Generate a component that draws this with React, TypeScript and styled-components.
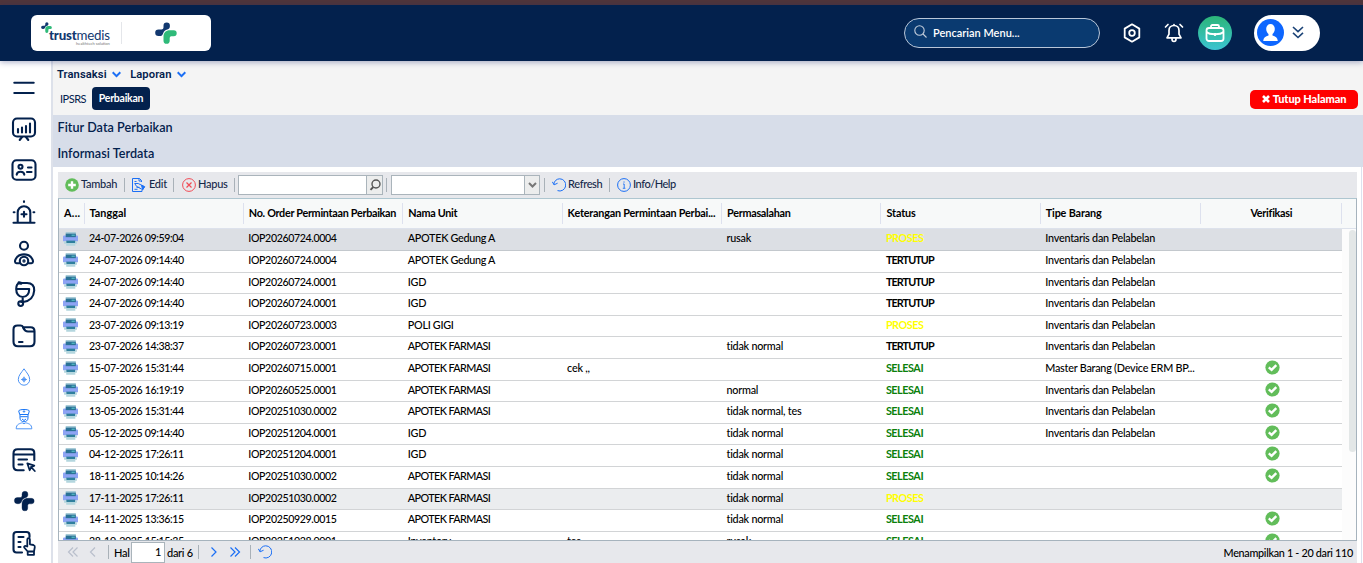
import React from "react";
import styled, { createGlobalStyle } from "styled-components";

const NAVY = "#03214d";
const BLUE = "#1b6ff5";

const GlobalStyle = createGlobalStyle`
  * { box-sizing: border-box; }
  body { margin: 0; overflow: hidden; background: #fff; }
  svg { display: block; flex: none; }
`;

const Page = styled.div`
  height: 563px;
  display: flex;
  flex-direction: column;
  overflow: hidden;
  font-family: Lato, "Liberation Sans", sans-serif;
  font-size: 11px;
  color: #000;
`;

const TopStrip = styled.div`
  flex: none;
  height: 5px;
  background: #50353a;
`;

const Header = styled.header`
  flex: none;
  height: 56px;
  display: flex;
  align-items: center;
  padding: 0 43px 0 31px;
  background: ${NAVY};
  box-shadow: 0 1px 6px rgba(30, 40, 110, 0.4);
  z-index: 1;
`;

const LogoCard = styled.div`
  width: 180px;
  height: 36px;
  border-radius: 6px;
  background: #fff;
  display: flex;
  align-items: center;
`;

const BrandHalf = styled.div`
  width: 91px;
  height: 22px;
  padding-left: 10px;
  border-right: 1px solid #e4e6ea;
  display: flex;
  align-items: flex-start;
`;

const Wordmark = styled.div`
  margin: 6px 0 0 -3px;
  font-size: 13.3px;
  line-height: 14px;
  letter-spacing: -0.2px;
  color: #12386f;
  b { font-weight: 900; }
`;

const Tagline = styled.div`
  font-size: 4px;
  line-height: 4px;
  letter-spacing: 0;
  text-align: right;
  color: #777;
`;

const MarkHalf = styled.div`
  flex: 1;
  display: flex;
  justify-content: center;
  padding-right: 1px;
`;

const Search = styled.div`
  margin-left: auto;
  width: 196px;
  height: 30px;
  border: 1px solid #b9c6d8;
  border-radius: 15px;
  background: #0a3a70;
  color: #fff;
  display: flex;
  align-items: center;
  padding: 0 0 2px 9px;
  gap: 6px;
  font-weight: 600;
  font-size: 11px;
  letter-spacing: 0;
  svg { margin-top: -2px; }
`;

const HeaderIcons = styled.div`
  display: flex;
  align-items: center;
  gap: 22px;
  margin: 0 14px 0 22px;
`;

const IconSlot = styled.div`
  width: 20px;
  display: flex;
  justify-content: center;
`;

const RoundButton = styled.div`
  width: 34px;
  height: 34px;
  border-radius: 50%;
  background: linear-gradient(#2cb578, #3bc4d2);
  display: flex;
  align-items: center;
  justify-content: center;
`;

const UserPill = styled.div`
  margin-left: 22px;
  width: 66px;
  height: 36px;
  border-radius: 18px;
  background: #fff;
  display: flex;
  align-items: center;
  padding: 0 0 1px 3px;
  gap: 8px;
`;

const Body = styled.div`
  flex: 1;
  min-height: 0;
  display: flex;
`;

const Sidebar = styled.nav`
  width: 51px;
  flex: none;
  padding: 12.5px 0 0 10px;
  display: flex;
  flex-direction: column;
  gap: 13.4px;
  svg { width: 28px; height: 28px; }
`;

const Main = styled.main`
  flex: 1;
  min-width: 0;
  border-left: 2px solid #dde1ea;
  display: flex;
  flex-direction: column;
`;

const MenuArea = styled.div`
  flex: none;
  height: 54px;
  background: #f4f4f4;
`;

const MenuBar = styled.div`
  height: 26px;
  padding-left: 4px;
  display: flex;
  align-items: center;
  gap: 9px;
`;

const MenuItem = styled.div`
  display: flex;
  align-items: center;
  gap: 5.5px;
  font-family: Roboto, "Liberation Sans", sans-serif;
  font-weight: 600;
  font-size: 11.2px;
  letter-spacing: 0.08px;
  color: ${NAVY};
`;

const TabRow = styled.div`
  height: 23px;
  padding: 0 5px 0 6px;
  display: flex;
  align-items: center;
`;

const Crumb = styled.span`
  width: 33px;
  padding-left: 1px;
  font-size: 11px;
  letter-spacing: -0.5px;
  color: ${NAVY};
`;

const ActiveTab = styled.span`
  width: 58px;
  height: 23px;
  border-radius: 4px;
  background: ${NAVY};
  color: #fff;
  font-weight: 700;
  font-size: 10.5px;
  line-height: 23px;
  letter-spacing: -0.25px;
  text-align: center;
`;

const CloseButton = styled.span`
  margin: 2px 0 0 auto;
  width: 108px;
  height: 19px;
  border-radius: 5px;
  background: #f00;
  color: #fff;
  display: flex;
  align-items: center;
  justify-content: center;
  gap: 3px;
  padding-bottom: 2px;
  font-weight: 900;
  font-size: 11px;
  line-height: 17px;
  letter-spacing: -0.08px;
`;

const SectionTitle = styled.div`
  flex: none;
  height: 26px;
  padding: 0 0 2px 4.5px;
  display: flex;
  align-items: center;
  background: #d7dde9;
  color: ${NAVY};
  font-weight: 600;
  font-size: 12.6px;
  letter-spacing: 0.04px;
`;

const Panel = styled.section`
  flex: 1;
  min-height: 0;
  margin-right: 1px;
  border-right: 1px solid #dde1ee;
  padding: 5px 4px 0 5px;
  display: flex;
  flex-direction: column;
`;

const Toolbar = styled.div`
  flex: none;
  height: 26px;
  padding-left: 7px;
  display: flex;
  align-items: center;
  background: #e7e8ec;
`;

const ToolButton = styled.div<{ $w: number; $gap?: number; $ls?: number }>`
  width: ${(p) => p.$w}px;
  display: flex;
  align-items: center;
  gap: ${(p) => p.$gap ?? 2}px;
  font-weight: 500;
  font-size: 11px;
  letter-spacing: ${(p) => p.$ls ?? -0.26}px;
  color: #16294a;
  white-space: nowrap;
  line-height: 14px;
  span { margin-top: -2px; }
`;

const Divider = styled.i<{ $mr: number }>`
  width: 1px;
  height: 14px;
  flex: none;
  margin-right: ${(p) => p.$mr}px;
  background: #a9b1b8;
`;

const Field = styled.div<{ $w: number; $mr: number }>`
  width: ${(p) => p.$w}px;
  height: 20px;
  margin-right: ${(p) => p.$mr}px;
  border: 1px solid #aab4bb;
  background: #fff;
  display: flex;
  justify-content: flex-end;
`;

const FieldTrigger = styled.div<{ $w: number }>`
  width: ${(p) => p.$w}px;
  border-left: 1px solid #aab4bb;
  background: #eceded;
  display: flex;
  align-items: center;
  justify-content: center;
`;

const Grid = styled.div`
  flex: none;
  height: 343px;
  border: 1px solid #a6b3bd;
  border-top-color: #aec6d0;
  display: flex;
  flex-direction: column;
  overflow: hidden;
`;

const COLUMNS = "25.5px 159.3px 159.5px 159.3px 159.4px 159.4px 159.4px 160px 141.2px";

const GridHeader = styled.div`
  flex: none;
  height: 30.4px;
  display: grid;
  grid-template-columns: ${COLUMNS};
  align-items: center;
  background: #f7f9f9;
  border-bottom: 1px solid #dde2ec;
`;

const HeadCell = styled.div<{ $center?: boolean; $ls?: number }>`
  height: 21px;
  padding: 0 4px 0 5px;
  line-height: 20px;
  border-right: 1px solid #dde1ee;
  font-weight: 700;
  font-size: 10.8px;
  letter-spacing: ${(p) => p.$ls ?? -0.1}px;
  text-align: ${(p) => (p.$center ? "center" : "left")};
  white-space: nowrap;
  overflow: hidden;
`;

const Scroller = styled.div`
  flex: 1;
  min-height: 0;
  display: flex;
  justify-content: space-between;
  overflow: hidden;
`;

const Rows = styled.div`
  width: 1283px;
`;

const Row = styled.div<{ $tone?: string }>`
  height: 21.6px;
  display: grid;
  grid-template-columns: ${COLUMNS};
  background: ${(p) => (p.$tone === "selected" ? "#dcdfe4" : p.$tone === "alt" ? "#ebedef" : "#fff")};
  border-bottom: 1px solid ${(p) => (p.$tone === "selected" ? "#c3c8cd" : "#d2d4d6")};
`;

const Cell = styled.div<{ $ls?: number }>`
  padding: 0 4.5px;
  line-height: 18px;
  font-size: 10.8px;
  letter-spacing: ${(p) => p.$ls ?? -0.23}px;
  font-weight: 500;
  white-space: nowrap;
  overflow: hidden;
`;

const NumCell = styled(Cell)`
  font-size: 10.6px;
  letter-spacing: -0.37px;
`;

const StatusCell = styled(Cell)<{ $status: string }>`
  font-weight: 700;
  color: ${(p) => (p.$status === "PROSES" ? "#ff0" : p.$status === "SELESAI" ? "#0a800a" : "#000")};
`;

const IconCell = styled.div`
  padding: 2.4px 0 0 4px;
`;

const CheckCell = styled.div`
  padding: 1px 0 0 2px;
  display: flex;
  justify-content: center;
`;

const ScrollTrack = styled.div`
  width: 14px;
  background: #fcfcfc;
  display: flex;
  justify-content: flex-end;
`;

const ScrollThumb = styled.div`
  width: 7px;
  height: 222px;
  margin-top: 1px;
  border-radius: 4px;
  background: #e3e7e7;
`;

const Pager = styled.div`
  flex: 1;
  display: flex;
  align-items: center;
  padding: 0 4px 0 9px;
  background: #e7e8ec;
  font-size: 11px;
  font-weight: 500;
  letter-spacing: -0.3px;
`;

const PageInput = styled.div`
  width: 34px;
  height: 21px;
  margin: 0 2px 0 1px;
  border: 1px solid #aab4bb;
  background: #fff;
  text-align: right;
  padding-right: 3px;
  line-height: 18px;
`;

const PagerSlot = styled.div<{ $w: number }>`
  width: ${(p) => p.$w}px;
  flex: none;
  white-space: nowrap;
`;

const Summary = styled.span`
  margin-left: auto;
  font-size: 10.8px;
  letter-spacing: -0.3px;
`;

const MARK_BACK =
  "M8.500 3.700a3.200 3.200 0 0 1 6.400 0C14.900 6.100 14.200 6.900 12.300 7.500 10.300 8.100 9 9 8.200 11.200 7.500 13.200 6.500 14 4.800 14H3.500a3.300 3.300 0 0 1 0-6.600H6.500Q8.500 7.400 8.500 5.400z";
const MARK_FRONT = "M18.700 8.200a3 3 0 0 1 0 6H16.300Q14.700 14.200 14.700 15.900V18.700a3.100 3.100 0 0 1-6.200 0V15C8.500 10.500 10.700 8.200 15 8.200z";

function PlusMark({ size }: { size: number }) {
  return (
    <svg width={size} height={size} viewBox="0 0 22 22">
      <path fill="#12386f" d={MARK_BACK} />
      <path fill="#2fba79" d={MARK_FRONT} />
    </svg>
  );
}

const Line = ({ children }: { children: React.ReactNode }) => (
  <svg viewBox="0 0 28 28" fill="none" stroke={NAVY} strokeWidth="2.1" strokeLinecap="round" strokeLinejoin="round">
    {children}
  </svg>
);

function SideIcons() {
  return (
    <Sidebar>
      <Line><path d="M4.300 8.800h19.400M4.300 19h19.400" /></Line>
      <Line>
        <rect x="3" y="3.500" width="22" height="18" rx="4" />
        <path d="M8 14v3.500M12 12.500v5M16 11v6.500M20 8.500v9M12 22l-2.300 3M16 22l2.300 3" />
      </Line>
      <Line>
        <rect x="2.500" y="4.200" width="23" height="19.600" rx="4" />
        <circle cx="10.500" cy="10.800" r="2" />
        <path d="M6.700 18.700c.3-4 7.300-4 7.600 0M18 11.500h3.500M17 16h4.500" />
      </Line>
      <Line>
        <path d="M3.500 24.700h21M7.700 24v-9.500a6.300 6.300 0 0 1 12.600 0V24M14 13.800v5M11.500 16.300h5M14 3.300v.6M3.700 14.200h.8M23.500 14.200h.8" />
      </Line>
      <Line>
        <circle cx="14" cy="6.700" r="4" />
        <path d="M9.500 24.200H6.500c-2 0-1.700-2.500-.8-4.200 3-6.200 13.600-6.200 16.600 0 .9 1.700 1.200 4.200-.8 4.200h-3" />
        <circle cx="14" cy="22" r="4.200" />
        <circle cx="14" cy="22" r=".6" />
      </Line>
      <Line>
        <path d="M11.500 3h-2C7 3.500 6.200 6 6.200 9c0 4.500 2.300 8 6.500 8s6.500-3.500 6.500-8M6.500 9h12.700M11.500 3h5.500c5 0 7.500 3 7.200 7.500-.4 6-4 10.500-11 11.500M12.700 17v3.500l-1.500 1.500" />
        <path d="M9 2.800l2 .4" strokeWidth="3" />
        <circle cx="10.700" cy="23.600" r="2.400" />
      </Line>
      <Line>
        <path d="M3.500 7.500c0-3 1.500-4 4-4h3c1.500 0 2 .5 3 1.800h7c3 0 4 1.500 4 4v10.500c0 3-1.500 4.500-4.500 4.500H8c-3 0-4.500-1.500-4.500-4.500zM13 5.500c1.500 3 2.500 4 5 4h6M9 20h3.500" />
      </Line>
      <svg viewBox="0 0 28 28" fill="none" stroke="#4c93f5" strokeWidth="1">
        <path d="M14 5.800C11.500 9.500 8.300 12.500 8.300 16.500a5.700 5.700 0 0 0 11.400 0C19.700 12.500 16.500 9.500 14 5.800zM14 13.700v5.600M11.200 16.500h5.600" />
        <circle cx="14" cy="16.500" r="1.600" />
      </svg>
      <svg viewBox="0 0 28 28" fill="none" stroke="#1674f5" strokeWidth="1">
        <path d="M8.700 6c0-2 10.600-2 10.600 0l-1 3.500H9.700zM10 9.500v3.500c0 5 8 5 8 0V9.500M10.300 11.700h7.400M12 14l2 1.500 2-1.500" />
        <path d="M14 5.200v2.600M12.700 6.500h2.600M6.200 23.800c0-5 4-5.300 6-6l1.800 1 1.800-1c2 .7 6 1 6 6z" stroke="#4c93f5" />
      </svg>
      <Line>
        <path d="M24.300 14V7.500c0-3-1-4.200-4-4.200H7.700c-3 0-4.200 1.200-4.200 4.200v12.500c0 3 1.200 4.200 4.200 4.200h6M3.500 8.500h20.800M8.500 13.500h8.500M8.500 18.500h4" />
        <path strokeWidth="1.800" d="M17.300 17.300l7 2.400-3 1.500-1.600 3zM21 21l3.800 4" />
      </Line>
      <svg viewBox="0 0 28 28">
        <g transform="translate(4.200 3.800) scale(.92)" fill={NAVY} stroke={NAVY} strokeWidth=".4">
          <path d={MARK_BACK} />
          <path d={MARK_FRONT} />
        </g>
      </svg>
      <Line>
        <path d="M12 23.500H6.500c-2 0-3-1-3-3V6c0-2 1-3 3-3h10c2 0 3 1 3 3v2M8.500 8h5M8.500 13h2M8.500 18h2" />
        <path d="M17.300 17.500V10.500c0-1.800 2.600-1.800 2.600 0v4.800l3.600.7c1 .3 1.500 1 1.300 2.200l-.8 4.300h-6.300l-3.500-4c-.5-1.200.8-2 1.700-1.400zM17.700 22.500v3.300h6.300v-3.300" strokeWidth="1.800" />
      </Line>
    </Sidebar>
  );
}

const Printer = () => (
  <svg width="15" height="14" viewBox="0 0 14 13" preserveAspectRatio="none">
    <path fill="#a9ccd8" d="M2.500 0h9.500v2H2.500z" />
    <path fill="#8ea4f4" d="M1 3.200h12q1 0 1 1V8.500H0V4.200q0-1 1-1z" />
    <path fill="#2a7296" d="M2.500 1.500h9.500v3.300H2.500z" />
    <path fill="#5cc6cc" d="M8 2.500h3v1H8z" />
    <path fill="#2f7f9d" d="M3 8h8.500v2.200H3z" />
    <path fill="#b4d6de" d="M1 8.500h2v1.700h8.500V8.500H13v2.500H1zM3 10.700h8.500v2H3z" />
  </svg>
);

const CheckBadge = () => (
  <svg width="15" height="15" viewBox="0 0 15 15">
    <circle cx="7.500" cy="7.500" r="7.100" fill="#62bd5a" />
    <path d="M3.800 7.400l2.800 2.500 4.700-4.700" fill="none" stroke="#fff" strokeWidth="2.400" />
  </svg>
);

const Reload = () => (
  <svg width="14" height="14" viewBox="0 0 14 14" fill="none" stroke={BLUE} strokeWidth="1">
    <path d="M1.800 6.500C2 3 4.800.8 7.700.8a6.100 6.100 0 1 1-2.200 11.800M.3 3.800l1.800 3 3.500-1.600" />
  </svg>
);

const Chevron = ({ dx = 1, n = 1, color = BLUE }: { dx?: number; n?: number; color?: string }) => (
  <svg width="12" height="12" viewBox="0 0 12 12" fill="none" stroke={color} strokeWidth="1.200">
    {dx > 0 ? <path d="M1.500 1.500L6 6l-4.500 4.500" /> : <path d="M6 1.500L1.500 6 6 10.500" />}
    {n === 2 && (dx > 0 ? <path d="M6 1.500L10.500 6 6 10.500" /> : <path d="M10.500 1.500L6 6l4.500 4.500" />)}
  </svg>
);

const DownBlue = () => (
  <svg width="9" height="7" viewBox="0 0 9 7" fill="none" stroke={BLUE} strokeWidth="2">
    <path d="M.7 1.300l3.800 3.800 3.800-3.800" />
  </svg>
);

const INV = "Inventaris dan Pelabelan";
type RepairRecord = [string, string, string, string, string, string, string, boolean, string?];
const RECORDS: RepairRecord[] = [
  ["24-07-2026 09:59:04", "IOP20260724.0004", "APOTEK Gedung A", "", "rusak", "PROSES", INV, false, "selected"],
  ["24-07-2026 09:14:40", "IOP20260724.0004", "APOTEK Gedung A", "", "", "TERTUTUP", INV, false],
  ["24-07-2026 09:14:40", "IOP20260724.0001", "IGD", "", "", "TERTUTUP", INV, false],
  ["24-07-2026 09:14:40", "IOP20260724.0001", "IGD", "", "", "TERTUTUP", INV, false],
  ["23-07-2026 09:13:19", "IOP20260723.0003", "POLI GIGI", "", "", "PROSES", INV, false],
  ["23-07-2026 14:38:37", "IOP20260723.0001", "APOTEK FARMASI", "", "tidak normal", "TERTUTUP", INV, false],
  ["15-07-2026 15:31:44", "IOP20260715.0001", "APOTEK FARMASI", "cek ,,", "", "SELESAI", "Master Barang (Device ERM BP...", true],
  ["25-05-2026 16:19:19", "IOP20260525.0001", "APOTEK FARMASI", "", "normal", "SELESAI", INV, true],
  ["13-05-2026 15:31:44", "IOP20251030.0002", "APOTEK FARMASI", "", "tidak normal, tes", "SELESAI", INV, true],
  ["05-12-2025 09:14:40", "IOP20251204.0001", "IGD", "", "tidak normal", "SELESAI", INV, true],
  ["04-12-2025 17:26:11", "IOP20251204.0001", "IGD", "", "tidak normal", "SELESAI", "", true],
  ["18-11-2025 10:14:26", "IOP20251030.0002", "APOTEK FARMASI", "", "tidak normal", "SELESAI", "", true],
  ["17-11-2025 17:26:11", "IOP20251030.0002", "APOTEK FARMASI", "", "tidak normal", "PROSES", "", false, "alt"],
  ["14-11-2025 13:36:15", "IOP20250929.0015", "APOTEK FARMASI", "", "tidak normal", "SELESAI", "", true],
  ["28-10-2025 15:15:35", "IOP20251028.0001", "Inventory", "tes", "rusak", "SELESAI", "", true],
];

const HEADINGS: [string, number?][] = [
  ["A...", 0.3],
  ["Tanggal", 0.05],
  ["No. Order Permintaan Perbaikan", -0.29],
  ["Nama Unit", -0.28],
  ["Keterangan Permintaan Perbai...", -0.2],
  ["Permasalahan", -0.27],
  ["Status"],
  ["Tipe Barang", -0.15],
  ["Verifikasi", -0.28],
];

export default function App() {
  return (
    <Page>
      <GlobalStyle />
      <TopStrip />
      <Header>
        <LogoCard>
          <BrandHalf>
            <PlusMark size={11} />
            <Wordmark>
              <b>trust</b>medis
              <Tagline>healthtech solution</Tagline>
            </Wordmark>
          </BrandHalf>
          <MarkHalf><PlusMark size={22} /></MarkHalf>
        </LogoCard>
        <Search>
          <svg width="13" height="13" viewBox="0 0 13 13" fill="none" stroke="#c2cddb" strokeWidth="1.100">
            <circle cx="5.500" cy="5.500" r="4.700" /><path d="M9 9l3.500 3.500" />
          </svg>
          Pencarian Menu...
        </Search>
        <HeaderIcons>
          <IconSlot>
            <svg width="18" height="20" viewBox="0 0 18 20" fill="none" stroke="#fff" strokeWidth="1.800" strokeLinejoin="round">
              <path d="M9 1.300l7.300 4.300v8.800L9 18.700l-7.300-4.300V5.600z" /><circle cx="9" cy="10" r="2.800" />
            </svg>
          </IconSlot>
          <IconSlot>
            <svg width="20" height="20" viewBox="0 0 20 20" fill="none" stroke="#fff" strokeWidth="1.700" strokeLinejoin="round" strokeLinecap="round">
              <path d="M10 2.500c-3 0-5 2.200-5 5v3.700L3 14.800h14l-2-3.600V7.500c0-2.800-2-5-5-5zM10 2.300V1.500M8 16c0 3.300 4 3.300 4 0M4 1.500L1.500 4M16 1.500L18.500 4" />
            </svg>
          </IconSlot>
        </HeaderIcons>
        <RoundButton>
          <svg width="20" height="18" viewBox="0 0 20 18" fill="none" stroke="#fff" strokeWidth="1.800" strokeLinejoin="round">
            <rect x="1.500" y="4" width="17" height="13" rx="2.500" /><path d="M6 4V2.500C6 1.500 6.500 1 7.500 1h5c1 0 1.500.5 1.500 1.500V4M1.500 8c3 3 14 3 17 0M10 9v3" />
          </svg>
        </RoundButton>
        <UserPill>
          <svg width="27" height="27" viewBox="0 0 27 27">
            <circle cx="13.500" cy="13.500" r="13.500" fill="#0d66ff" />
            <path fill="#fff" d="M13.500 5a4.300 4.800 0 0 1 4.300 5c0 2.500-1.300 4-2.300 5v1.500c3 .7 5 2.200 5.300 5.500H6.200c.3-3.300 2.300-4.800 5.300-5.500V15c-1-1-2.300-2.500-2.300-5a4.300 4.800 0 0 1 4.300-5z" />
          </svg>
          <svg width="12" height="13" viewBox="0 0 12 13" fill="none" stroke="#1b4377" strokeWidth="1.600">
            <path d="M1 1l5 4.700L11 1M1 6.800l5 4.700 5-4.700" />
          </svg>
        </UserPill>
      </Header>
      <Body>
        <SideIcons />
        <Main>
          <MenuArea>
            <MenuBar>
              <MenuItem>Transaksi <DownBlue /></MenuItem>
              <MenuItem>Laporan <DownBlue /></MenuItem>
            </MenuBar>
            <TabRow>
              <Crumb>IPSRS</Crumb>
              <ActiveTab>Perbaikan</ActiveTab>
              <CloseButton>
                <svg width="8" height="8" viewBox="0 0 8 8" stroke="#fff" strokeWidth="2.600"><path d="M1 1l6 6M7 1L1 7" /></svg>
                Tutup Halaman
              </CloseButton>
            </TabRow>
          </MenuArea>
          <SectionTitle>Fitur Data Perbaikan</SectionTitle>
          <SectionTitle>Informasi Terdata</SectionTitle>
          <Panel>
            <Toolbar>
              <ToolButton $w={59}>
                <svg width="14" height="14" viewBox="0 0 14 14"><circle cx="7" cy="7" r="6.800" fill="#62bd5a" /><path d="M7 3.200v7.600M3.200 7h7.600" stroke="#fff" strokeWidth="2.400" /></svg>
                <span>Tambah</span>
              </ToolButton>
              <Divider $mr={7} />
              <ToolButton $w={41} $gap={3}>
                <svg width="14" height="14" viewBox="0 0 14 14" fill="none" stroke={BLUE} strokeWidth="1">
                  <path d="M9.500 4V2.500L7.500.5h-7v13h9.500v-1.500M7 .5V3h2.500M2.500 3.500h2M2.500 11.300h3M4.500 9.300h3" />
                  <path d="M2.700 5.500h3.500l6.300 3.200-1.800 3-6-3.200z" />
                  <path fill={BLUE} d="M9.500 7.300l3 1.400-1.800 3z" />
                </svg>
                <span>Edit</span>
              </ToolButton>
              <Divider $mr={8} />
              <ToolButton $w={52}>
                <svg width="14" height="14" viewBox="0 0 14 14" fill="none" stroke="#f14b55" strokeWidth="1"><circle cx="7" cy="7" r="6.400" /><path d="M4.500 4.500l5 5M9.500 4.500l-5 5" strokeWidth="1.200" /></svg>
                <span>Hapus</span>
              </ToolButton>
              <Divider $mr={3} />
              <Field $w={145} $mr={3}>
                <FieldTrigger $w={16}>
                  <svg width="12" height="12" viewBox="0 0 12 12" fill="none" stroke="#555" strokeWidth="1.400"><circle cx="7" cy="5" r="4" /><path d="M4.300 8L1.500 10.800" strokeWidth="1.900" /></svg>
                </FieldTrigger>
              </Field>
              <Divider $mr={4} />
              <Field $w={149} $mr={4}>
                <FieldTrigger $w={15}>
                  <svg width="9" height="6" viewBox="0 0 9 6" fill="none" stroke="#777" strokeWidth="2"><path d="M1 1l3.500 3.500L8 1" /></svg>
                </FieldTrigger>
              </Field>
              <Divider $mr={7} />
              <ToolButton $w={57} $ls={-0.35}><Reload /><span>Refresh</span></ToolButton>
              <Divider $mr={7} />
              <ToolButton $w={70} $ls={-0.48}>
                <svg width="14" height="14" viewBox="0 0 14 14" fill="none" stroke={BLUE} strokeWidth="1"><circle cx="7" cy="7" r="6.400" /><path d="M6 6h1.200v4M5.800 10.300h2.600M7 3.400v1.300" strokeWidth=".9" /></svg>
                <span>Info/Help</span>
              </ToolButton>
            </Toolbar>
            <Grid>
              <GridHeader>
                {HEADINGS.map(([h, ls], i) => <HeadCell key={h} $center={i === 8} $ls={ls}>{h}</HeadCell>)}
              </GridHeader>
              <Scroller>
                <Rows>
                  {RECORDS.map((r, i) => (
                    <Row key={i} $tone={r[8]}>
                      <IconCell><Printer /></IconCell>
                      <NumCell>{r[0]}</NumCell>
                      <NumCell>{r[1]}</NumCell>
                      <Cell $ls={r[2] === "APOTEK FARMASI" ? -0.6 : -0.3}>{r[2]}</Cell>
                      <Cell>{r[3]}</Cell>
                      <Cell>{r[4]}</Cell>
                      <StatusCell $status={r[5]} $ls={r[5] === "TERTUTUP" ? -0.9 : -0.45}>{r[5]}</StatusCell>
                      <Cell>{r[6]}</Cell>
                      <CheckCell>{r[7] && <CheckBadge />}</CheckCell>
                    </Row>
                  ))}
                </Rows>
                <ScrollTrack><ScrollThumb /></ScrollTrack>
              </Scroller>
            </Grid>
            <Pager>
              <PagerSlot $w={22}><Chevron dx={-1} n={2} color="#b9bfcc" /></PagerSlot>
              <PagerSlot $w={19}><Chevron dx={-1} color="#b9bfcc" /></PagerSlot>
              <Divider $mr={5} />
              <PagerSlot $w={16}>Hal</PagerSlot>
              <PageInput>1</PageInput>
              <PagerSlot $w={31}>dari 6</PagerSlot>
              <Divider $mr={11} />
              <PagerSlot $w={19}><Chevron /></PagerSlot>
              <PagerSlot $w={21}><Chevron n={2} /></PagerSlot>
              <Divider $mr={7} />
              <Reload />
              <Summary>Menampilkan 1 - 20 dari 110</Summary>
            </Pager>
          </Panel>
        </Main>
      </Body>
    </Page>
  );
}
